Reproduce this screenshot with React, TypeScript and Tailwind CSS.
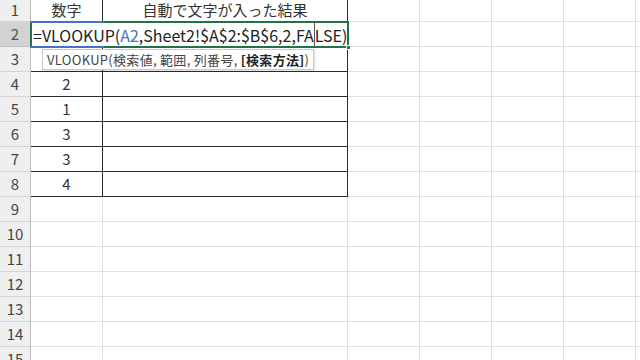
import React from "react";

const font = { fontFamily: '"Noto Sans CJK JP", "Noto Sans", sans-serif' };

const colA: Record<number, string> = { 1: "数字", 4: "2", 5: "1", 6: "3", 7: "3", 8: "4" };
const colB: Record<number, string> = { 1: "自動で文字が入った結果" };

const Row = ({ n }: { n: number }) => {
  const inTable = n <= 8;
  const active = n === 2;
  const h = n === 1 ? "h-[22px]" : "h-[25px]";
  const tb = inTable ? "border-b-[#2b2b2b]" : "border-b-[#e1e1e1]";
  const tr = inTable ? "border-r-[#2b2b2b]" : "border-r-[#e1e1e1]";
  return (
    <div className={`flex ${h}`}>
      <div
        className={`w-[31px] shrink-0 flex items-center justify-center border-r border-b text-[15px] ${
          active
            ? "bg-[#d2d2d2] text-[#217346] border-r-[#9f9f9f] border-b-[#c0c0c0]"
            : "bg-[#efefef] text-[#444] border-r-[#bdbdbd] border-b-[#d4d4d4]"
        }`}
      >
        {n}
      </div>
      <div className={`w-[72px] shrink-0 flex items-center justify-center border-b border-r text-[15px] text-[#333] ${tb} ${tr}`}>
        {colA[n]}
      </div>
      <div className={`w-[245px] shrink-0 flex items-center justify-center border-b border-r text-[15px] text-[#333] ${tb} ${tr}`}>
        {colB[n]}
      </div>
      {[0, 1, 2, 3].map((i) => (
        <div key={i} className="w-[72px] shrink-0 border-b border-r border-[#e1e1e1]" />
      ))}
      <div className="flex-1 border-b border-[#e1e1e1]" />
    </div>
  );
};

export default function App() {
  const rows = Array.from({ length: 15 }, (_, i) => i + 1);
  return (
    <div className="w-[640px] h-[360px] overflow-hidden bg-white relative" style={font}>
      <div>
        {rows.map((n) => (
          <Row key={n} n={n} />
        ))}
      </div>

      {/* in-cell editor over A2:B2 */}
      <div className="absolute left-[30px] top-[21px] w-[319px] h-[27px] bg-white border-2 border-[#217346] flex items-center">
        <div className="absolute -left-[2px] -top-[2px] w-[74px] h-[27px] border-y-2 border-[#4472c4]" />
        <span className="pl-[1px] text-[16px] leading-none text-[#222] whitespace-nowrap flex items-center">
          =VLOOKUP(<span className="text-[#4472c4]">A2</span>,Sheet2!$A$2:$B$6,2,FA
          <span className="inline-block w-px h-[25px] bg-[#555]" />
          LSE)
        </span>
        <div className="absolute -right-[4px] -bottom-[4px] w-[5px] h-[5px] bg-[#217346] border border-white" />
      </div>

      {/* function tooltip */}
      <div className="absolute left-[42px] top-[49px] h-[21px] px-[4px] bg-white border border-[#c8c8c8] shadow-[1px_1px_2px_rgba(0,0,0,0.15)] flex items-center text-[13px] tracking-[0.3px] text-[#444] whitespace-pre">
        VLOOKUP(検索値, 範囲, 列番号, <span className="font-bold text-[#222]">[検索方法]</span>)
      </div>
    </div>
  );
}
